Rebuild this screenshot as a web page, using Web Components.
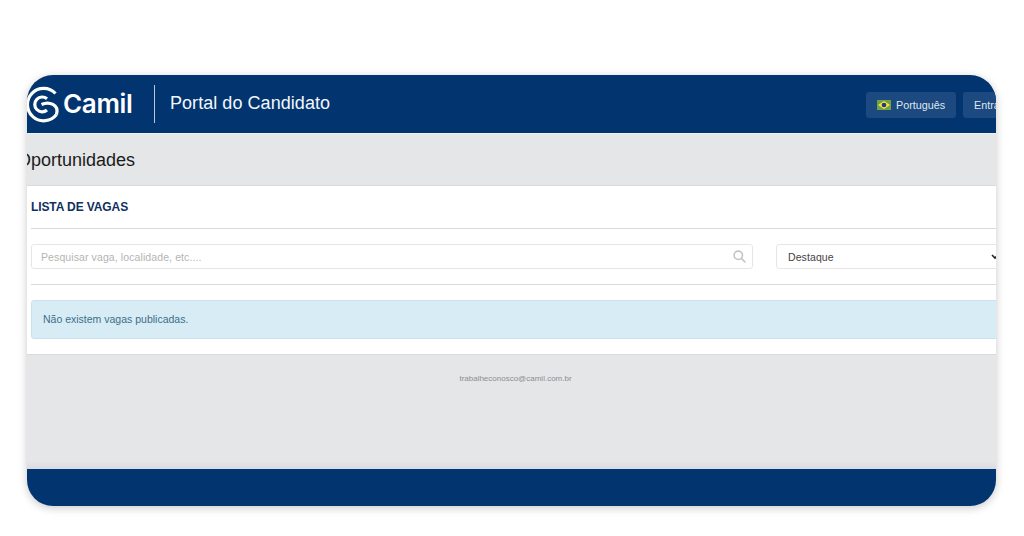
<!DOCTYPE html>
<html lang="pt">
<head>
<meta charset="utf-8">
<title>Portal do Candidato</title>
<style>
  html, body { margin: 0; height: 100%; background: #fff; }
  body { font-family: "Liberation Sans", Arial, sans-serif; overflow: hidden; }
</style>
</head>
<body>
<portal-frame>
  <portal-header slot="top"></portal-header>
  <page-title>Oportunidades</page-title>
  <job-panel></job-panel>
  <portal-footer></portal-footer>
</portal-frame>

<script>
/* Rounded window that crops the page inside it */
class PortalFrame extends HTMLElement {
  constructor() {
    super();
    this.attachShadow({ mode: 'open' });
    this.shadowRoot.innerHTML = `
      <style>
        :host { display: block; padding: 75px 28px 30px 27px; height: 536px; box-sizing: border-box; }
        .frame {
          height: 431px;
          border-radius: 26px;
          overflow: hidden;
          background: #e5e6e8;
          box-shadow: 0 2px 9px rgba(0, 0, 0, 0.22);
          display: flex;
          flex-direction: column;
        }
      </style>
      <div class="frame">
        <slot name="top"></slot>
        <slot></slot>
      </div>
    `;
  }
}

class PortalHeader extends HTMLElement {
  constructor() {
    super();
    this.attachShadow({ mode: 'open' });
    this.shadowRoot.innerHTML = `
      <style>
        :host { display: block; flex: none; }
        .bar {
          height: 59px;
          box-sizing: border-box;
          background: #023570;
          border-bottom: 1px solid #e9f0f6;
          display: flex;
          align-items: center;
          color: #fff;
          overflow: hidden;
        }
        .logo { display: flex; align-items: center; flex: none; height: 38px; }
        .logo svg { display: block; margin-left: -1px; }
        .word {
          font: 600 26px/38px Inter, sans-serif;
          letter-spacing: -0.3px;
          margin-left: 1px;
          width: 70px;
        }
        .sep { width: 1px; height: 38px; background: #b9c8da; margin: 0 15px 0 21px; flex: none; }
        .name { font-size: 18px; letter-spacing: 0.05px; flex: none; width: 696px; margin-top: -2px; color: #f4f7fa; }
        .btn {
          flex: none;
          height: 26px;
          display: flex;
          align-items: center;
          border-radius: 3px;
          background: #1c497f;
          font-size: 10.8px;
          color: #dfe7f0;
          box-sizing: border-box;
          margin-top: 2px;
        }
        .lang { width: 90px; padding-left: 11px; gap: 5px; margin-right: 7px; }
        .login { width: 60px; padding-left: 11px; }
      </style>
      <div class="bar">
        <div class="logo">
          <svg width="36" height="38" viewBox="0 0 36 38" fill="none" stroke="#fff" stroke-width="3.2" stroke-linecap="butt">
            <path d="M29.5 8.5 A16.2 16.2 0 1 0 30.5 29.5"/>
            <path d="M15.5 19.5 C 23 16 33.5 19.5 30.5 29.5"/>
            <path d="M21 13.8 A 7.4 7.4 0 1 0 21 25"/>
          </svg>
          <span class="word">Camil</span>
        </div>
        <div class="sep"></div>
        <div class="name">Portal do Candidato</div>
        <div class="btn lang">
          <svg width="14" height="10" viewBox="0 0 14 10">
            <rect width="14" height="10" fill="#6da544"/>
            <path d="M7 1 13 5 7 9 1 5Z" fill="#ffda44"/>
            <circle cx="7" cy="5" r="2.3" fill="#1b3f86"/>
          </svg>
          <span>Português</span>
        </div>
        <div class="btn login">Entrar</div>
      </div>
    `;
  }
}

/* Heading is pushed left on purpose: the frame crops its first letter */
class PageTitle extends HTMLElement {
  constructor() {
    super();
    this.attachShadow({ mode: 'open' });
    this.shadowRoot.innerHTML = `
      <style>
        :host { display: block; flex: none; height: 51px; }
        h1 {
          margin: 0 0 0 -10px;
          font: 400 18px/20px "Liberation Sans", Arial, sans-serif;
          color: #1b1b1b;
          padding-top: 16px;
        }
      </style>
      <h1><slot></slot></h1>
    `;
  }
}

class JobPanel extends HTMLElement {
  constructor() {
    super();
    this.attachShadow({ mode: 'open' });
    this.shadowRoot.innerHTML = `
      <style>
        :host { display: block; flex: none; }
        .panel {
          background: #fff;
          border-top: 1px solid #d9dadc;
          border-bottom: 1px solid #d9dadc;
          width: 1000px;
          box-sizing: border-box;
          height: 170px;
          padding-left: 4px;
        }
        h2 {
          margin: 0;
          height: 42px;
          font: 700 12px/42px "Liberation Sans", Arial, sans-serif;
          color: #10305f;
          letter-spacing: -0.1px;
          border-bottom: 1px solid #d9dadc;
        }
        .filters {
          display: flex;
          gap: 23px;
          padding: 15px 0;
          border-bottom: 1px solid #d9dadc;
        }
        .search, .sort {
          flex: none;
          height: 25px;
          box-sizing: border-box;
          border: 1px solid #e6e6e6;
          border-radius: 3px;
          display: flex;
          align-items: center;
          font-size: 10.5px;
          letter-spacing: 0.1px;
        }
        .search { width: 722px; padding: 0 6px 0 9px; justify-content: space-between; color: #b4b4b4; }
        .sort { width: 240px; padding-left: 11px; color: #444; position: relative; }
        .sort svg { position: absolute; left: 214px; top: 9px; }
        .alert {
          margin-top: 15px;
          height: 39px;
          box-sizing: border-box;
          background: #d8ecf6;
          border: 1px solid #c8e3f0;
          border-radius: 3px;
          padding-left: 11px;
          font-size: 10.5px;
          line-height: 37px;
          color: #3a6f8a;
        }
      </style>
      <div class="panel">
        <h2>LISTA DE VAGAS</h2>
        <div class="filters">
          <div class="search">
            <span>Pesquisar vaga, localidade, etc....</span>
            <svg width="13" height="13" viewBox="0 0 13 13" fill="none" stroke="#c4c4c4" stroke-width="1.6">
              <circle cx="5.3" cy="5.3" r="4.2"/>
              <path d="M8.4 8.4 12 12" stroke-linecap="round"/>
            </svg>
          </div>
          <div class="sort">
            <span>Destaque</span>
            <svg width="8" height="6" viewBox="0 0 8 6" fill="none" stroke="#222" stroke-width="1.6">
              <path d="M1 1 4 4 7 1"/>
            </svg>
          </div>
        </div>
        <div class="alert">Não existem vagas publicadas.</div>
      </div>
    `;
  }
}

class PortalFooter extends HTMLElement {
  constructor() {
    super();
    this.attachShadow({ mode: 'open' });
    this.shadowRoot.innerHTML = `
      <style>
        :host { display: flex; flex-direction: column; flex: 1; min-height: 0; }
        .mail {
          flex: 1;
          text-align: center;
          font-size: 8px;
          line-height: 10px;
          padding: 19px 0 0 8px;
          color: #8d8d8f;
          box-sizing: border-box;
          background: linear-gradient(#e5e6e8 94%, #dcdde0);
        }
        .bar { height: 38px; background: #023570; flex: none; border-top: 1px solid #d6dde6; box-sizing: border-box; }
      </style>
      <div class="mail">trabalheconosco@camil.com.br</div>
      <div class="bar"></div>
    `;
  }
}

customElements.define('portal-frame', PortalFrame);
customElements.define('portal-header', PortalHeader);
customElements.define('page-title', PageTitle);
customElements.define('job-panel', JobPanel);
customElements.define('portal-footer', PortalFooter);
</script>
</body>
</html>
